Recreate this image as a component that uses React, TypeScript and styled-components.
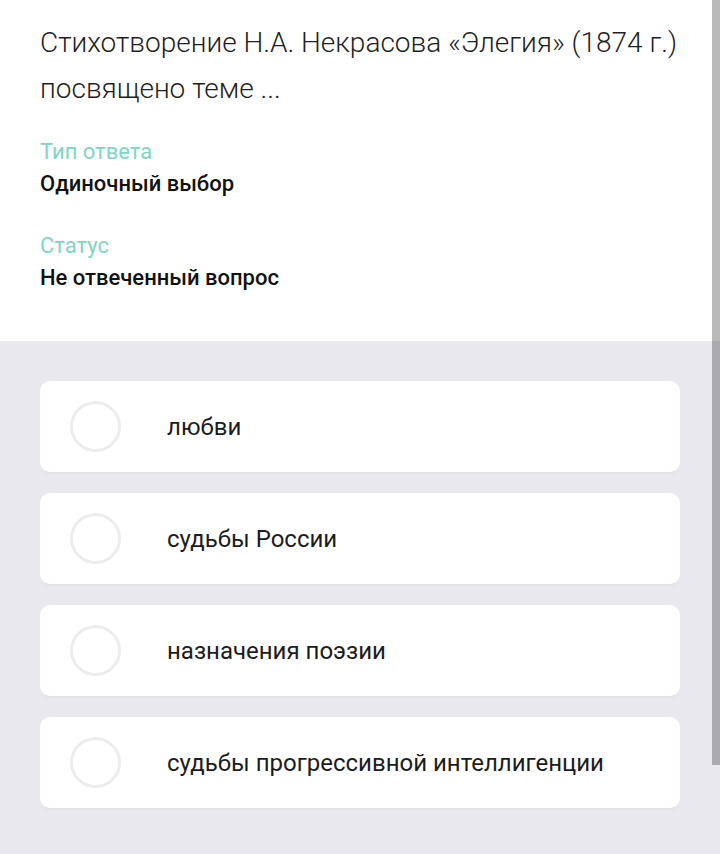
import React from "react";
import styled, { createGlobalStyle } from "styled-components";

const Global = createGlobalStyle`
  html, body { margin: 0; padding: 0; background: #e9e8ee; }
  body { font-family: Roboto, "Noto Sans", sans-serif; -webkit-font-smoothing: antialiased; }
`;

const Page = styled.div`
  position: relative;
  width: 720px;
  min-height: 854px;
  background: #e9e8ee;
`;

const Header = styled.section`
  background: #ffffff;
  padding: 20px 40px 0 40px;
  height: 341px;
  box-sizing: border-box;
`;

const Question = styled.h1`
  margin: 0 0 27px 0;
  font-family: Roboto, sans-serif;
  font-weight: 300;
  font-size: 28px;
  line-height: 46px;
  color: #1f1f1f;
`;

const Field = styled.div`
  display: flex;
  flex-direction: column;
  gap: 6px;
  margin-bottom: 36px;
`;

const Label = styled.div`
  font-size: 22px;
  line-height: 26px;
  color: #7fd6c2;
`;

const Value = styled.div`
  font-size: 22px;
  line-height: 26px;
  font-weight: 500;
  color: #111111;
`;

const Options = styled.div`
  display: flex;
  flex-direction: column;
  gap: 21px;
  padding: 40px 40px 46px 40px;
`;

const Option = styled.label`
  display: flex;
  align-items: center;
  height: 91px;
  background: #ffffff;
  border-radius: 10px;
  box-shadow: 0 2px 1px rgba(0, 0, 0, 0.025);
  padding-left: 30px;
  box-sizing: border-box;
  cursor: pointer;
`;

const Radio = styled.span`
  flex: none;
  width: 45px;
  height: 45px;
  border-radius: 50%;
  border: 3px solid #ececec;
  margin-right: 46px;
`;

const OptionText = styled.span`
  font-size: 24px;
  color: #1c1c1c;
`;

const Scrollbar = styled.div`
  position: absolute;
  top: 0;
  right: 0;
  width: 8px;
  height: 765px;
  background: rgba(0, 0, 0, 0.27);
`;

const options = [
  "любви",
  "судьбы России",
  "назначения поэзии",
  "судьбы прогрессивной интеллигенции",
];

export default function App() {
  return (
    <Page>
      <Global />
      <Header>
        <Question>
          Стихотворение Н.А. Некрасова «Элегия» (1874 г.) посвящено теме ...
        </Question>
        <Field>
          <Label>Тип ответа</Label>
          <Value>Одиночный выбор</Value>
        </Field>
        <Field>
          <Label>Статус</Label>
          <Value>Не отвеченный вопрос</Value>
        </Field>
      </Header>
      <Options>
        {options.map((o) => (
          <Option key={o}>
            <Radio />
            <OptionText>{o}</OptionText>
          </Option>
        ))}
      </Options>
      <Scrollbar />
    </Page>
  );
}
